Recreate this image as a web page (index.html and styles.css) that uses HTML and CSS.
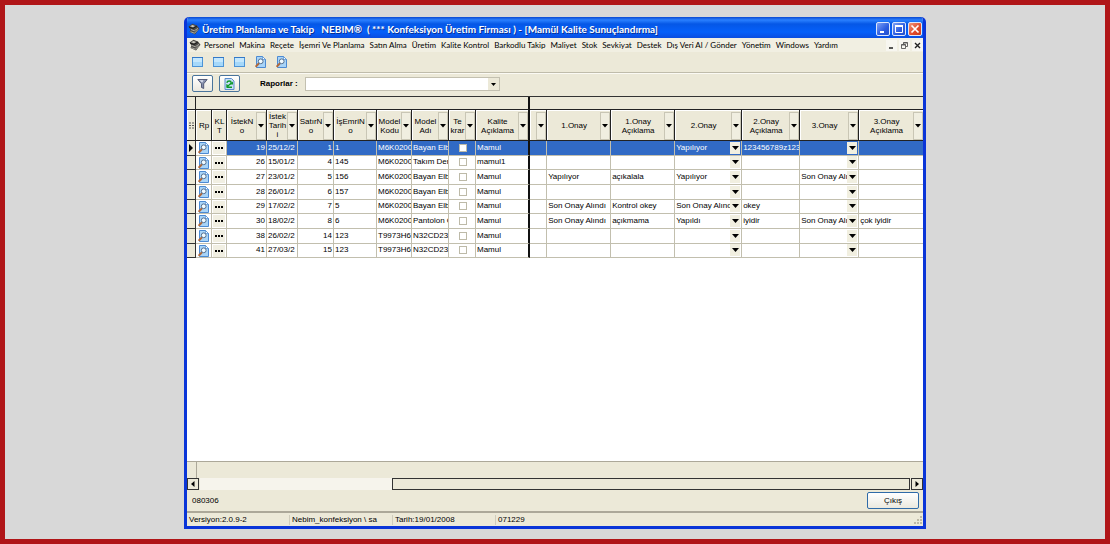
FILE: index.html
```html
<!DOCTYPE html>
<html lang="tr">
<head>
  <meta charset="UTF-8">
  <meta name="viewport" content="width=device-width, initial-scale=1.0">
  <title>Üretim Planlama ve Takip</title>
  <link rel="stylesheet" href="styles.css">
</head>
<body>
  <svg class="sprite" aria-hidden="true">
    <symbol id="app" viewBox="0 0 12 12">
      <path d="M.5 3.500 4.500.8 9 2.500l2.500 3.300L7 11.500 1.500 9l1-2.500z" fill="#4a4946"/>
      <path d="M2 3.300 4.500 2 7 3 5 4.300z" fill="#cfcdc2"/>
      <path d="M3 6.500l3.300 1.300L10 5.300M2.500 8.700l4 1.500 3.500-3.700" fill="none" stroke="#c4c2b7" stroke-width=".8"/>
      <path d="M1 4 5 5.500 9 3" fill="none" stroke="#1d1d1b"/>
    </symbol>
    <symbol id="form" viewBox="0 0 11 12">
      <rect x=".5" y="1.500" width="10" height="9" fill="#a5d8fa" stroke="#4c93d6"/>
      <path d="M0 1.500h11" stroke="#3379c8"/>
      <path d="M1 2h9v4H1z" fill="#c4e7fd"/>
    </symbol>
    <symbol id="preview" viewBox="0 0 11 12">
      <path d="M1.500.5h6l3 3v8h-9z" fill="#a8d4f8" stroke="#4c8ad2"/>
      <path d="M7.500.5v3h3z" fill="#fff" stroke="#4c8ad2" stroke-width=".7"/>
      <path d="M.6 10.800 4 7.300" stroke="#b0683a" stroke-width="2"/>
      <circle cx="5.700" cy="5.300" r="2.400" fill="#f2fbff" stroke="#56708f"/>
    </symbol>
    <symbol id="funnel" viewBox="0 0 11 11">
      <path d="M.8 1h9.400L6.700 5.300V10L4.500 9V5.300z" fill="#8790ad" stroke="#3c4566" stroke-width=".8"/>
      <path d="M2.500 1.800h4L5.200 4z" fill="#dfe4f1"/>
    </symbol>
    <symbol id="refresh" viewBox="0 0 11 12">
      <path d="M1 .5h6.500l2.500 2.500v8.500H1z" fill="#c9e0f8" stroke="#5a8dcc"/>
      <path d="M2.800 4.800C3.500 2.500 7 2.500 7.200 4.800 7.200 6.200 3.500 7 3.300 9.300H8" fill="none" stroke="#109a2c" stroke-width="1.500"/>
      <path d="M9 3.500v3H5.800zM2.300 6v3.500L5 7.500z" fill="#109a2c"/>
    </symbol>
  </svg>

  <main class="window">
    <header class="titlebar">
      <svg class="app-icon"><use href="#app"/></svg>
      <h1>Üretim Planlama ve Takip &nbsp; NEBIM® &nbsp;( *** Konfeksiyon Üretim Firması ) - [Mamül Kalite Sunuçlandırma]</h1>
      <div class="window-buttons">
        <button type="button" aria-label="Küçült"><svg viewBox="0 0 12 12"><path d="M3 9h4" stroke="#fff" stroke-width="2"/></svg></button>
        <button type="button" aria-label="Ekranı kapla"><svg viewBox="0 0 12 12"><path d="M2.500 3v6.500h7V3" fill="none" stroke="#fff"/><path d="M2 3h8" stroke="#fff" stroke-width="2"/></svg></button>
        <button type="button" class="close" aria-label="Kapat"><svg viewBox="0 0 12 12"><path d="m2.500 2.500 7 7m0-7-7 7" stroke="#fff" stroke-width="1.700"/></svg></button>
      </div>
    </header>

    <nav class="menu">
      <svg class="app-icon"><use href="#app"/></svg>
      <a href="#">Personel</a>
      <a href="#">Makina</a>
      <a href="#">Reçete</a>
      <a href="#">İşemri Ve Planlama</a>
      <a href="#">Satın Alma</a>
      <a href="#">Üretim</a>
      <a href="#">Kalite Kontrol</a>
      <a href="#">Barkodlu Takip</a>
      <a href="#">Maliyet</a>
      <a href="#">Stok</a>
      <a href="#">Sevkiyat</a>
      <a href="#">Destek</a>
      <a href="#">Dış Veri Al / Gönder</a>
      <a href="#">Yönetim</a>
      <a href="#">Windows</a>
      <a href="#">Yardım</a>
      <div class="child-buttons">
        <button type="button" aria-label="Pencereyi küçült"><svg viewBox="0 0 11 11"><path d="M3 8h4" stroke="#222" stroke-width="1.500"/></svg></button>
        <button type="button" aria-label="Önceki boyut"><svg viewBox="0 0 11 11"><path d="M4.500 4V2.500h4v4H7M2.500 4.500h4v4h-4zM2.500 5h4M4.500 3h4" fill="none" stroke="#444" stroke-width=".8"/></svg></button>
        <button type="button" aria-label="Pencereyi kapat"><svg viewBox="0 0 11 11"><path d="m3 3 5 5m0-5L3 8" stroke="#222" stroke-width="1.400"/></svg></button>
      </div>
    </nav>

    <div class="toolbar">
      <button type="button" aria-label="Form 1"><svg><use href="#form"/></svg></button>
      <button type="button" aria-label="Form 2"><svg><use href="#form"/></svg></button>
      <button type="button" aria-label="Form 3"><svg><use href="#form"/></svg></button>
      <button type="button" aria-label="Önizleme 1"><svg><use href="#preview"/></svg></button>
      <button type="button" aria-label="Önizleme 2"><svg><use href="#preview"/></svg></button>
    </div>

    <div class="filterbar">
      <button type="button" class="xp-button" aria-label="Filtre"><svg><use href="#funnel"/></svg></button>
      <button type="button" class="xp-button" aria-label="Yenile"><svg><use href="#refresh"/></svg></button>
      <label for="reports">Raporlar :</label>
      <select id="reports"><option></option></select>
    </div>

    <section class="grid">
      <table>
        <colgroup id="cols"></colgroup>
        <thead>
          <tr class="bands">
            <th></th>
            <th colspan="10" class="split"></th>
            <th colspan="7"></th>
          </tr>
          <tr class="heads" id="heads"></tr>
        </thead>
        <tbody id="rows"></tbody>
      </table>
    </section>

    <div class="grid-footer"></div>
    <div class="scrollbar">
      <button type="button" aria-label="Sola kaydır"><svg viewBox="0 0 10 10"><path d="M6.500 2v6L3 5z"/></svg></button>
      <div class="track"><div class="thumb"></div></div>
      <button type="button" aria-label="Sağa kaydır"><svg viewBox="0 0 10 10"><path d="M3.500 2v6L7 5z"/></svg></button>
    </div>

    <div class="actions">
      <span>080306</span>
      <button type="button" class="xp-button exit">Çıkış</button>
    </div>

    <footer class="statusbar">
      <span>Versiyon:2.0.9-2</span>
      <span>Nebim_konfeksiyon \ sa</span>
      <span>Tarih:19/01/2008</span>
      <span>071229</span>
      <svg class="grip" viewBox="0 0 9 9"><path d="M6 1h2v2H6zM3 4h2v2H3zM6 4h2v2H6zM0 7h2v2H0zM3 7h2v2H3zM6 7h2v2H6z" fill="#bdb9a6"/></svg>
    </footer>
  </main>

  <script>
    // title, column class, has a filter button
    const columns = [
      ['', 'c-mark', false],
      ['Rp', 'c-rp', false],
      ['KL<br>T', 'c-klt', false],
      ['İstekN<br>o', 'c-request', true],
      ['İstek<br>Tarih<br>i', 'c-date', true],
      ['SatırN<br>o', 'c-line', true],
      ['İşEmriN<br>o', 'c-order', true],
      ['Model<br>Kodu', 'c-code', true],
      ['Model<br>Adı', 'c-model', true],
      ['Te<br>krar', 'c-repeat', true],
      ['Kalite<br>Açıklama', 'c-quality', true],
      ['', 'c-blank', true],
      ['1.Onay', 'c-ok1', true],
      ['1.Onay<br>Açıklama', 'c-note1', true],
      ['2.Onay', 'c-ok2', true],
      ['2.Onay<br>Açıklama', 'c-note2', true],
      ['3.Onay', 'c-ok3', true],
      ['3.Onay<br>Açıklama', 'c-note3', true]
    ];

    const rows = [
      ['19', '25/12/2', '1', '1', 'M6K0200', 'Bayan Elb', 'Mamul', '', '', 'Yapılıyor', '123456789z1234', '', ''],
      ['26', '15/01/2', '4', '145', 'M6K0200', 'Takım Der', 'mamul1', '', '', '', '', '', ''],
      ['27', '23/01/2', '5', '156', 'M6K0200', 'Bayan Elb', 'Mamul', 'Yapılıyor', 'açıkalala', 'Yapılıyor', '', 'Son Onay Alındı', ''],
      ['28', '26/01/2', '6', '157', 'M6K0200', 'Bayan Elb', 'Mamul', '', '', '', '', '', ''],
      ['29', '17/02/2', '7', '5', 'M6K0200', 'Bayan Elb', 'Mamul', 'Son Onay Alındı', 'Kontrol okey', 'Son Onay Alındı', 'okey', '', ''],
      ['30', '18/02/2', '8', '6', 'M6K0200', 'Pantolon C', 'Mamul', 'Son Onay Alındı', 'açıkmama', 'Yapıldı', 'iyidir', 'Son Onay Alındı', 'çok iyidir'],
      ['38', '26/02/2', '14', '123', 'T9973H6', 'N32CD23', 'Mamul', '', '', '', '', '', ''],
      ['41', '27/03/2', '15', '123', 'T9973H6', 'N32CD23', 'Mamul', '', '', '', '', '', '']
    ];

    document.getElementById('cols').innerHTML = columns.map(c => `<col class="${c[1]}">`).join('');

    document.getElementById('heads').innerHTML = columns.map((c, i) => {
      const filter = c[2] ? '<button type="button" class="filter" aria-label="Filtrele"></button>' : '';
      const mark = i === 0 ? '<svg class="list-icon" viewBox="0 0 5 7"><path d="M0 1h2m1 0h2M0 3.500h2m1 0h2M0 6h2m1 0h2" stroke="#555"/></svg>' : '';
      return `<th class="${i === 10 ? 'split' : ''}"><div class="head"><span>${mark}${c[0]}</span>${filter}</div></th>`;
    }).join('');

    function combo(text, name) {
      return `<td class="combo"><select aria-label="${name}"><option>${text}</option></select></td>`;
    }

    document.getElementById('rows').innerHTML = rows.map((r, i) => `
      <tr class="${i === 0 ? 'selected' : ''}">
        <td class="mark">${i === 0 ? '<svg viewBox="0 0 5 8"><path d="M1 0v8l4-4z"/></svg>' : ''}</td>
        <td class="tool"><button type="button" aria-label="Rapor"><svg><use href="#preview"/></svg></button></td>
        <td class="tool"><button type="button" class="dots" aria-label="Kalite"></button></td>
        <td class="num">${r[0]}</td>
        <td>${r[1]}</td>
        <td class="num">${r[2]}</td>
        <td>${r[3]}</td>
        <td>${r[4]}</td>
        <td>${r[5]}</td>
        <td class="check"><input type="checkbox" aria-label="Tekrar"></td>
        <td class="split">${r[6]}</td>
        <td></td>
        <td>${r[7]}</td>
        <td>${r[8]}</td>
        ${combo(r[9], '2.Onay')}
        <td>${r[10]}</td>
        ${combo(r[11], '3.Onay')}
        <td>${r[12]}</td>
      </tr>`).join('');
  </script>
</body>
</html>
```
FILE: styles.css
```css
* {
  box-sizing: border-box;
}
body {
  display: flex;
  min-height: 100vh;
  margin: 0;
  padding: 12px 179px 10px;
  border: 5px solid #b01518;
  background: #d8d8d8;
  font-family: "Liberation Sans", Arial, sans-serif;
  font-size: 8px;
  line-height: 10px;
  color: #000;
}
button, select, input {
  margin: 0;
  padding: 0;
  border: 0;
  border-radius: 0;
  background: none;
  font: inherit;
  color: inherit;
  appearance: none;
}
svg {
  display: block;
  flex: none;
}
.sprite {
  position: absolute;
  width: 0;
  height: 0;
}
.window {
  display: flex;
  flex-direction: column;
  flex: 1;
  min-width: 0;
  border: 3px solid #0a35d8;
  border-top: 0;
  border-radius: 5px 5px 0 0;
  background: #ece9d8;
  overflow: hidden;
}

/* title bar */
.titlebar {
  display: flex;
  align-items: center;
  gap: 2px;
  height: 21px;
  margin: 0 -3px;
  padding: 2px 4px 0 4px;
  background: linear-gradient(#0a48d0, #2a80ff 3px, #0557e6 7px, #0560fa 15px, #0a4de0);
}
.titlebar h1 {
  flex: 1;
  margin: 0;
  font-family: Lato, "Liberation Sans", sans-serif;
  font-size: 10px;
  line-height: 14px;
  color: #fff;
  white-space: nowrap;
  text-shadow: 1px 1px #0a2f94;
}
.app-icon {
  width: 12px;
  height: 12px;
}
.window-buttons, .child-buttons {
  display: flex;
  gap: 2px;
}
.window-buttons button {
  width: 14px;
  height: 14px;
  border: 1px solid #dce6fb;
  border-radius: 2px;
  background: linear-gradient(135deg, #7ea0f5, #2a5be0 60%, #2450cc);
}
.window-buttons .close {
  background: linear-gradient(135deg, #f0967a, #e0492a 60%, #c83c1c);
}

/* menu */
.menu {
  display: flex;
  align-items: center;
  gap: 5px;
  height: 14px;
  padding-left: 2px;
  background: #f1efe2;
  font-family: Lato, "Liberation Sans", sans-serif;
  white-space: nowrap;
}
.menu .app-icon {
  margin-right: -2px;
}
.menu a {
  color: #000;
  text-decoration: none;
}
.child-buttons {
  margin-left: auto;
}
.child-buttons button {
  width: 11px;
  height: 11px;
  background: #f7f6f0;
}

/* toolbars */
.toolbar {
  display: flex;
  align-items: center;
  gap: 10px;
  height: 21px;
  padding-left: 5px;
  border-bottom: 1px solid #bfbcab;
}
.toolbar svg {
  width: 11px;
  height: 12px;
}
.filterbar {
  display: flex;
  align-items: center;
  height: 23px;
  padding: 0 0 3px 5px;
  border-top: 1px solid #fbfaf4;
}
.xp-button {
  display: flex;
  align-items: center;
  justify-content: center;
  width: 21px;
  height: 17px;
  border: 1px solid #49749c;
  border-radius: 2px;
  background: linear-gradient(#fff, #ebe9df);
}
.filterbar .xp-button {
  margin-right: 6px;
}
.xp-button svg {
  width: 11px;
  height: 12px;
}
.filterbar label {
  width: 45px;
  margin-left: 14px;
  font-weight: bold;
}
#reports {
  width: 195px;
  height: 14px;
  border: 1px solid #c3c0b0;
  background: #fff url("data:image/svg+xml,%3Csvg xmlns='http://www.w3.org/2000/svg' width='11' height='12'%3E%3Cpath d='M0 0h11v12H0z' fill='%23ece9d8'/%3E%3Cpath d='M3 5h5L5.500 8z'/%3E%3C/svg%3E") no-repeat right center;
}

/* grid */
.grid {
  flex: 1;
  border-top: 1px solid #333;
  background: #fff;
}
table {
  width: 100%;
  border-collapse: separate;
  border-spacing: 0;
  table-layout: fixed;
}
.c-mark { width: 9px; }
.c-rp { width: 16px; }
.c-klt { width: 15px; }
.c-request { width: 40px; }
.c-date { width: 31px; }
.c-line { width: 36px; }
.c-order { width: 43px; }
.c-code { width: 35px; }
.c-model { width: 37px; }
.c-repeat { width: 27px; }
.c-quality { width: 54px; }
.c-blank { width: 17px; }
.c-ok1, .c-note1 { width: 64px; }
.c-ok2 { width: 67px; }
.c-note2 { width: 58px; }
.c-ok3 { width: 59px; }
th, td {
  padding: 0;
  overflow: hidden;
  white-space: nowrap;
}
th {
  border-right: 1px solid #222;
  border-bottom: 1px solid #222;
  background: #ece9d8;
  font-weight: normal;
}
.bands th {
  height: 13px;
}
.bands th:last-child, .heads th:last-child {
  border-right: 0;
}
.heads th {
  height: 31px;
}
.bands .split, .heads .split, td.split {
  border-right: 2px solid #111;
}
.head {
  display: flex;
  align-items: center;
  height: 30px;
  border-top: 1px solid #fff;
  border-left: 1px solid #fff;
  line-height: 9px;
}
.head span {
  flex: 1;
  min-width: 0;
  text-align: center;
}
.list-icon {
  width: 5px;
  height: 7px;
  margin: auto;
}
.filter {
  flex: none;
  width: 10px;
  height: 28px;
  border: 1px solid #c9c6b5;
  background: #f0eee0 url("data:image/svg+xml,%3Csvg xmlns='http://www.w3.org/2000/svg' width='6' height='4'%3E%3Cpath d='M0 0h6L3 3.500z'/%3E%3C/svg%3E") no-repeat center;
}
tbody tr {
  height: 15px;
}
tbody tr:nth-child(3n+2) {
  height: 14px;
}
td {
  border-right: 1px solid #c2bfae;
  border-bottom: 1px solid #c2bfae;
  padding: 0 0 1px 1px;
}
td:last-child {
  border-right: 0;
}
.num {
  padding-right: 1px;
  text-align: right;
}
.mark {
  border-color: #333;
  background: #ece9d8;
}
.mark svg {
  width: 5px;
  height: 8px;
}
.tool {
  padding: 0 1px;
}
.tool button {
  display: block;
  width: 12px;
  height: 12px;
  margin: auto;
}
.tool svg {
  width: 11px;
  height: 12px;
}
.tool .dots {
  background: #f1efe2 url("data:image/svg+xml,%3Csvg xmlns='http://www.w3.org/2000/svg' width='8' height='2'%3E%3Cpath d='M0 0h2v2H0zM3 0h2v2H3zM6 0h2v2H6z'/%3E%3C/svg%3E") no-repeat center;
}
.check input {
  display: block;
  width: 8px;
  height: 8px;
  margin: auto;
  border: 1px solid #bdbaa8;
  background: #fff;
}
.combo select {
  display: block;
  width: 100%;
  height: 12px;
  padding-right: 11px;
  background: url("data:image/svg+xml,%3Csvg xmlns='http://www.w3.org/2000/svg' width='11' height='12'%3E%3Cpath d='M0 0h10v12H0z' fill='%23f1efe0'/%3E%3Cpath d='M2 4h7L5.500 8z'/%3E%3C/svg%3E") no-repeat right center;
}
.selected td:not(.mark):not(.tool) {
  background-color: #316ac5;
  color: #fff;
}

/* bottom */
.grid-footer {
  height: 17px;
  border-top: 1px solid #aca899;
}
.grid-footer::before {
  content: "";
  display: block;
  width: 9px;
  height: 16px;
  border-right: 1px solid #aca899;
}
.scrollbar {
  display: flex;
  gap: 1px;
  height: 12px;
}
.scrollbar button {
  width: 12px;
  border: 1px solid #333;
}
.track {
  display: flex;
  flex: 1;
  justify-content: flex-end;
  background: #f6f4ec;
}
.thumb {
  width: 73%;
  border: 1px solid #333;
  background: #ece9d8;
}
.actions {
  display: flex;
  align-items: center;
  justify-content: space-between;
  height: 22px;
  padding: 0 4px 0 5px;
  border-bottom: 1px solid #aca899;
}
.exit {
  width: 52px;
  border-color: #2f6ba8;
}
.statusbar {
  display: flex;
  align-items: center;
  height: 14px;
  border-top: 1px solid #aca899;
}
.statusbar span {
  width: 103px;
  padding-left: 2px;
  border-right: 1px solid #cfccbc;
}
.statusbar span:nth-last-child(2) {
  border-right: 0;
}
.grip {
  width: 9px;
  height: 9px;
  margin-left: auto;
}
```
